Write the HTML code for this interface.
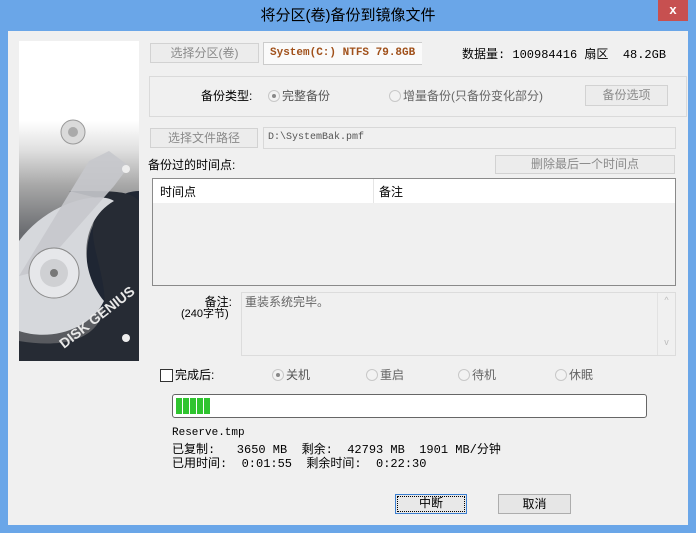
<!DOCTYPE html>
<html><head><meta charset="utf-8"><style>
*{margin:0;padding:0;box-sizing:border-box}
body{width:696px;height:533px;background:#6aa6e8;position:relative;overflow:hidden;font-family:"Liberation Sans","Noto Sans CJK SC",sans-serif;font-size:12px;color:#000}
.a{position:absolute;white-space:nowrap}
.btn{position:absolute;border:1px solid #d2d2d2;background:#ececec;color:#8a8a8a;text-align:center;font-size:12px}
.rad{position:absolute;width:12px;height:12px;border-radius:50%;border:1px solid #c8c8c8;background:#f2f2f2}
.rad.on::after{content:"";position:absolute;left:3px;top:3px;width:4px;height:4px;border-radius:50%;background:#888}
.mono{font-family:"Liberation Mono","Noto Sans CJK SC",monospace}
.st{white-space:pre;font-family:"Liberation Mono","Noto Sans CJK SC",monospace;font-size:12px;line-height:14px}
</style></head><body>
<div class="a" style="left:0;top:0;width:696px;height:31px;text-align:center;line-height:31px;font-size:15px;color:#000">将分区(卷)备份到镜像文件</div>
<div class="a" style="left:658px;top:0;width:30px;height:21px;background:#c75050;color:#fff;text-align:center;line-height:20px;font-size:13px;font-weight:bold">x</div>
<div class="a" style="left:8px;top:31px;width:680px;height:494px;background:#f0f0f0"></div>

<div class="a" style="left:19px;top:41px;width:120px;height:320px;overflow:hidden;background:linear-gradient(#fff 0%,#fff 25%,#e0e0e0 34%,#a8a8a8 45%,#6a6c70 60%,#55575c 100%)">
<svg width="120" height="320" viewBox="0 0 120 320">
<path d="M120 150 C95 150 70 175 68 210 C66 250 85 280 120 300 Z" fill="#1f2633"/>
<path d="M50 150 C100 150 110 150 120 160 L120 320 L0 320 L0 300 C60 310 90 290 85 250 C80 210 60 180 90 160 Z" fill="#262b34"/>
<path d="M0 200 C30 160 80 150 95 160 C60 180 60 230 85 260 C70 290 30 300 0 290 Z" fill="#d6d8dc"/>
<path d="M0 235 L70 120 L90 110 L110 125 L95 145 L20 230 Z" fill="#c6c8cc" opacity="0.9"/>
<circle cx="54" cy="91" r="12" fill="#dadada" stroke="#999"/>
<circle cx="54" cy="91" r="5" fill="#aaa"/>
<circle cx="35" cy="232" r="25" fill="#e6e7ea" stroke="#8a8a8a"/>
<circle cx="35" cy="232" r="14" fill="#cfd0d3"/>
<circle cx="35" cy="232" r="4" fill="#777"/>
<circle cx="107" cy="128" r="4" fill="#eee"/>
<circle cx="107" cy="297" r="4" fill="#eee"/>
<text x="0" y="0" transform="translate(45 308) rotate(-38)" fill="#e8e8e8" font-size="14" font-weight="bold" font-family="Liberation Sans">DISK GENIUS</text>
</svg></div>

<div class="btn" style="left:150px;top:43px;width:109px;height:20px;line-height:18px">选择分区(卷)</div>
<div class="a mono" style="left:263px;top:42px;width:159px;height:23px;background:#fafafa;border:1px solid #ccc;border-right:none;color:#a0501a;font-weight:bold;font-size:11px;line-height:21px;padding-left:6px;overflow:hidden">System(C:) NTFS 79.8GB</div>
<div class="a st" style="left:462px;top:48px">数据量: 100984416 扇区  48.2GB</div>

<div class="a" style="left:149px;top:76px;width:538px;height:41px;border:1px solid #dadada"></div>
<div class="a" style="left:201px;top:88px;line-height:16px">备份类型:</div>
<div class="rad on" style="left:268px;top:90px"></div>
<div class="a" style="left:282px;top:88px;line-height:16px;color:#555">完整备份</div>
<div class="rad" style="left:389px;top:90px"></div>
<div class="a" style="left:403px;top:88px;line-height:16px;color:#666">增量备份(只备份变化部分)</div>
<div class="btn" style="left:585px;top:85px;width:83px;height:21px;line-height:19px">备份选项</div>

<div class="btn" style="left:150px;top:128px;width:108px;height:20px;line-height:18px">选择文件路径</div>
<div class="a mono" style="left:263px;top:127px;width:413px;height:22px;border:1px solid #d8d8d8;background:#f0f0f0;font-size:10px;color:#555;line-height:20px;padding-left:4px">D:\SystemBak.pmf</div>

<div class="a" style="left:148px;top:157px;line-height:16px">备份过的时间点:</div>
<div class="btn" style="left:495px;top:155px;width:180px;height:19px;line-height:17px">删除最后一个时间点</div>

<div class="a" style="left:152px;top:178px;width:524px;height:108px;border:1px solid #8a8a8a;background:#f0f0f0">
<div style="position:absolute;left:0;top:0;width:522px;height:24px;background:#fff"></div>
<div style="position:absolute;left:220px;top:0;width:1px;height:24px;background:#e5e5e5"></div>
<div style="position:absolute;left:7px;top:5px;line-height:16px">时间点</div>
<div style="position:absolute;left:226px;top:5px;line-height:16px">备注</div>
</div>

<div class="a" style="left:200px;top:296px;width:32px;text-align:right;line-height:13px">备注:</div>
<div class="a" style="left:181px;top:308px;line-height:13px;font-size:11px">(240字节)</div>
<div class="a" style="left:241px;top:292px;width:435px;height:64px;border:1px solid #dcdcdc;background:#f0f0f0">
<div style="position:absolute;left:3px;top:1px;line-height:16px;color:#666">重装系统完毕。</div>
<div style="position:absolute;right:0;top:0;width:18px;height:62px;border-left:1px solid #e2e2e2;color:#bbb;font-size:9px;text-align:center;line-height:14px">^<br><br><br>v</div>
</div>

<div class="a" style="left:160px;top:369px;width:13px;height:13px;border:1px solid #333;background:#fff"></div>
<div class="a" style="left:175px;top:367px;line-height:16px">完成后:</div>
<div class="rad on" style="left:272px;top:369px"></div><div class="a" style="left:286px;top:367px;line-height:16px;color:#555">关机</div>
<div class="rad" style="left:366px;top:369px"></div><div class="a" style="left:380px;top:367px;line-height:16px;color:#666">重启</div>
<div class="rad" style="left:458px;top:369px"></div><div class="a" style="left:472px;top:367px;line-height:16px;color:#666">待机</div>
<div class="rad" style="left:555px;top:369px"></div><div class="a" style="left:569px;top:367px;line-height:16px;color:#666">休眠</div>

<div class="a" style="left:172px;top:394px;width:475px;height:24px;border:1px solid #666;border-radius:3px;background:#fff">
<div style="position:absolute;left:3px;top:3px;width:34px;height:16px;background:repeating-linear-gradient(90deg,#2fc42f 0,#2fc42f 6px,#fff 6px,#fff 7px)"></div>
</div>
<div class="a st" style="left:172px;top:426px;font-size:11px">Reserve.tmp</div>
<div class="a st" style="left:172px;top:443px">已复制:   3650 MB  剩余:  42793 MB  1901 MB/分钟</div>
<div class="a st" style="left:172px;top:457px">已用时间:  0:01:55  剩余时间:  0:22:30</div>

<div class="btn" style="left:395px;top:494px;width:72px;height:20px;line-height:16px;color:#000;border:1px solid #3c7fd0;outline:1px dotted #000;outline-offset:-3px;background:#e8e8e8">中断</div>
<div class="btn" style="left:498px;top:494px;width:73px;height:20px;line-height:18px;color:#000;border-color:#adadad;background:#e6e6e6">取消</div>
</body></html>
